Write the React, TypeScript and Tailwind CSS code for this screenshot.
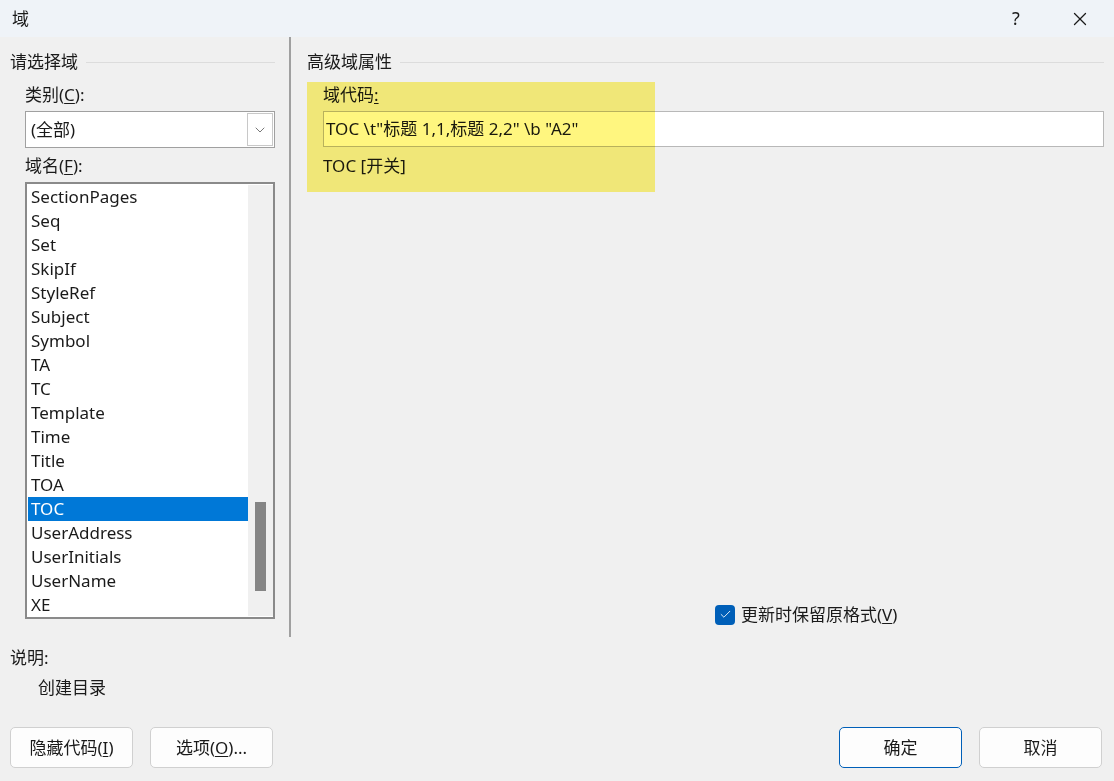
import { Check, ChevronDown, X } from 'lucide-react';

const items = ['SectionPages', 'Seq', 'Set', 'SkipIf', 'StyleRef', 'Subject', 'Symbol', 'TA', 'TC', 'Template', 'Time', 'Title', 'TOA', 'TOC', 'UserAddress', 'UserInitials', 'UserName', 'XE'];

const U = ({ c }: { c: string }) => <span className="underline underline-offset-2">{c}</span>;

const App = () => {
  return (
    <div className="w-[1114px] h-[781px] bg-[#f0f0f0] text-[17px] text-[#1a1a1a] flex flex-col overflow-hidden" style={{ fontFamily: '"Noto Sans", "Noto Sans CJK SC", sans-serif' }}>
      <div className="h-[37px] bg-[#eff3f8] flex items-center pl-3 shrink-0">
        <span className="flex-1 text-[17px]">域</span>
        <span className="w-[60px] text-center text-[18px]">?</span>
        <span className="w-[68px] flex justify-center"><X size={22} strokeWidth={1.4} /></span>
      </div>
      <div className="flex flex-1 relative">
        <div className="w-[291px] pl-[10px] pr-[14px] pt-[12px] border-r-2 border-[#a0a0a0] h-[600px] shrink-0 flex flex-col">
          <div className="flex items-center gap-2 leading-[26px]"><span>请选择域</span><div className="flex-1 h-px bg-[#dcdcdc]" /></div>
          <div className="pl-[15px] mt-[8px] leading-[24px]">类别(<U c="C" />):</div>
          <div className="ml-[15px] mt-[4px] h-[37px] bg-white border border-[#a0a0a0] flex items-center pl-[5px]">
            <span className="flex-1">(全部)</span>
            <div className="w-[26px] h-[33px] mr-[1px] border border-[#c8c8c8] bg-white flex items-center justify-center"><ChevronDown size={16} strokeWidth={1.2} className="text-[#555]" /></div>
          </div>
          <div className="pl-[15px] mt-[6px] leading-[24px]">域名(<U c="F" />):</div>
          <div className="ml-[15px] mt-[4px] h-[437px] bg-white border-2 border-[#8a8a8a] flex py-[1px]">
            <div className="flex-1 pt-0 pl-[1px]">
              {items.map((it) => (
                <div key={it} className={`h-[24px] leading-[24px] pl-[3px] ${it === 'TOC' ? 'bg-[#0078d7] text-white' : ''}`}>{it}</div>
              ))}
            </div>
            <div className="w-[25px] bg-[#f0f0f0] relative">
              <div className="absolute left-[7px] top-[317px] w-[11px] h-[89px] bg-[#858585]" />
            </div>
          </div>
          <div className="flex-1" />
        </div>
        <div className="flex-1 pl-[16px] pr-[10px] pt-[12px] relative">
          <div className="flex items-center gap-2 leading-[26px]"><span>高级域属性</span><div className="flex-1 h-px bg-[#dcdcdc]" /></div>
          <div className="pl-[16px] mt-[8px] leading-[24px]">域代码<U c=":" /></div>
          <div className="ml-[16px] mt-[4px] h-[36px] bg-white border border-[#b8b8b8] flex items-center pl-[2px]">TOC \t"标题 1,1,标题 2,2" \b "A2"</div>
          <div className="pl-[16px] mt-[6px] leading-[26px]">TOC [开关]</div>
          <div className="absolute left-[16px] top-[45px] w-[348px] h-[110px] bg-[#ffee00]/50 mix-blend-multiply pointer-events-none" />
          <div className="absolute left-[424px] top-[565px] flex items-center gap-[6px]">
            <div className="w-[20px] h-[20px] rounded-[4px] bg-[#005fb8] flex items-center justify-center"><Check size={13} strokeWidth={1.6} className="text-white" /></div>
            <span>更新时保留原格式(<U c="V" />)</span>
          </div>
        </div>
        <div className="absolute left-[10px] top-[608px]">说明:</div>
        <div className="absolute left-[38px] top-[638px]">创建目录</div>
      </div>
      <div className="h-[54px] shrink-0 flex px-[10px] pb-[13px] gap-[17px]">
        <button className="w-[123px] h-[41px] bg-[#fdfdfd] border border-[#d0d0d0] rounded-[5px]">隐藏代码(<U c="I" />)</button>
        <button className="w-[123px] h-[41px] bg-[#fdfdfd] border border-[#d0d0d0] rounded-[5px]">选项(<U c="O" />)...</button>
        <div className="flex-1" />
        <button className="w-[123px] h-[41px] bg-[#fdfdfd] border border-[#005fb8] rounded-[5px] mr-[0px]">确定</button>
        <button className="w-[123px] h-[41px] bg-[#fdfdfd] border border-[#d0d0d0] rounded-[5px] mr-[2px]">取消</button>
      </div>
    </div>
  );
};

export default App;
